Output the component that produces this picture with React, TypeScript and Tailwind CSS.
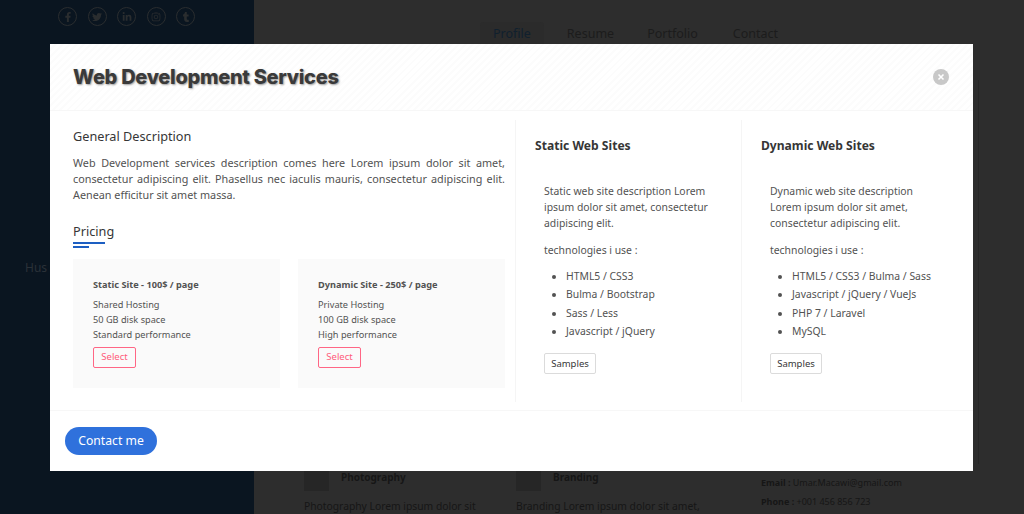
import React from "react";
import { FaFacebookF, FaTwitter, FaLinkedinIn, FaInstagram, FaTumblr } from "react-icons/fa";

const socials = [FaFacebookF, FaTwitter, FaLinkedinIn, FaInstagram, FaTumblr];

const plans = [
  { title: "Static Site - 100$ / page", lines: ["Shared Hosting", "50 GB disk space", "Standard performance"] },
  { title: "Dynamic Site - 250$ / page", lines: ["Private Hosting", "100 GB disk space", "High performance"] },
];

const services = [
  {
    title: "Static Web Sites",
    description: "Static web site description Lorem ipsum dolor sit amet, consectetur adipiscing elit.",
    tech: ["HTML5 / CSS3", "Bulma / Bootstrap", "Sass / Less", "Javascript / jQuery"],
  },
  {
    title: "Dynamic Web Sites",
    description: "Dynamic web site description Lorem ipsum dolor sit amet, consectetur adipiscing elit.",
    tech: ["HTML5 / CSS3 / Bulma / Sass", "Javascript / jQuery / VueJs", "PHP 7 / Laravel", "MySQL"],
  },
];

const App: React.FC = () => {
  return (
    <div className="relative flex h-[514px] w-[1024px] overflow-hidden bg-[#2d2d2d] font-['Noto_Sans',sans-serif]">
      {/* Page behind the modal */}
      <aside className="w-[254px] shrink-0 bg-[#0a1520]">
        <div className="flex gap-[10.5px] pl-[58px] pt-[7px]">
          {socials.map((Icon, i) => (
            <span
              key={i}
              className="flex h-[19px] w-[19px] items-center justify-center rounded-full border border-[#2a2d2f] text-[10px] text-[#2a2d2f]"
            >
              <Icon />
            </span>
          ))}
        </div>
        <p className="pl-[25px] pt-[233px] text-[12px] text-[#2a3138]">Hus</p>
      </aside>

      <main className="flex-1">
        <nav className="flex pl-[226px] pt-[22px] text-[12.5px] text-[#1c1c1c]">
          <span className="rounded-t bg-[#2b2b2b] px-[13px] py-[3px] text-[#10202e]">Profile</span>
          <span className="ml-[23px] py-[3px]">Resume</span>
          <span className="ml-[33px] py-[3px]">Portfolio</span>
          <span className="ml-[35px] py-[3px]">Contact</span>
        </nav>
        <div className="mt-[423px] flex pl-[50px] text-[#161616]">
          <div className="w-[212px]">
            <div className="flex gap-[12px]">
              <span className="h-[21px] w-[25px] bg-[#262626]" />
              <b className="text-[10px]">Photography</b>
            </div>
            <p className="mt-[8px] text-[10.3px]">Photography Lorem ipsum dolor sit</p>
          </div>
          <div className="w-[245px]">
            <div className="flex gap-[12px]">
              <span className="h-[21px] w-[25px] bg-[#262626]" />
              <b className="text-[10px]">Branding</b>
            </div>
            <p className="mt-[8px] text-[10.3px]">Branding Lorem ipsum dolor sit amet,</p>
          </div>
          <div className="mt-[3px] text-[9px] leading-[19px]">
            <p><b>Email :</b> Umar.Macawi@gmail.com</p>
            <p><b>Phone :</b> +001 456 856 723</p>
          </div>
        </div>
      </main>
      <span className="absolute left-[978px] top-[80px] h-[384px] w-px bg-[#262626]" />

      {/* Modal */}
      <div className="absolute left-[50px] top-[44px] flex h-[427px] w-[923px] flex-col bg-white text-[#525252]">
        <header className="flex h-[67px] shrink-0 items-center justify-between border-b border-[#f7f7f7] bg-[repeating-linear-gradient(135deg,#ffffff_0px,#ffffff_3px,#fcfcfc_3px,#fcfcfc_5px)] pl-[23px] pr-[24px]">
          <h1 className="font-['Inter',sans-serif] text-[20px] font-extrabold tracking-[-0.3px] text-[#3a3a3a] [text-shadow:1px_1px_2px_#9a9a9a]">
            Web Development Services
          </h1>
          <button className="flex h-[16px] w-[16px] items-center justify-center rounded-full bg-[#c8c8c8]">
            <svg width="8" height="8" viewBox="0 0 8 8" fill="none" stroke="white" strokeWidth="1.6">
              <path d="M1.5 1.5l5 5M6.5 1.5l-5 5" />
            </svg>
          </button>
        </header>

        <div className="flex h-[299px] shrink-0">
          <section className="w-[465px] shrink-0 pl-[23px] pr-[10px] pt-[15px]">
            <h2 className="text-[12.7px] leading-[20px] text-[#363636]">General Description</h2>
            <p className="mt-[9px] text-justify text-[10.8px] leading-[16px]">
              Web Development services description comes here Lorem ipsum dolor sit amet, consectetur adipiscing elit.
              Phasellus nec iaculis mauris, consectetur adipiscing elit. Aenean efficitur sit amet massa.
            </p>
            <h2 className="mt-[18px] text-[12.7px] leading-[20px] text-[#363636]">Pricing</h2>
            <div className="mt-[1px] h-[2px] w-[32px] bg-[#1d5fc2]" />
            <div className="mt-[2px] h-[2px] w-[16px] bg-[#1d5fc2]" />
            <div className="mt-[11px] grid grid-cols-2 gap-[18px]">
              {plans.map((plan) => (
                <div key={plan.title} className="h-[129px] bg-[#fafafa] pl-[20px] pt-[18px]">
                  <h3 className="text-[9.2px] font-bold leading-[16px]">{plan.title}</h3>
                  <ul className="mt-[4px] text-[9.2px] leading-[15px]">
                    {plan.lines.map((line) => (
                      <li key={line}>{line}</li>
                    ))}
                  </ul>
                  <button className="mt-[5px] h-[21px] w-[43px] rounded-[2px] border border-[#ff6685] text-[9.5px] text-[#ff5c7c]">
                    Select
                  </button>
                </div>
              ))}
            </div>
          </section>

          {services.map((service, i) => (
            <section
              key={service.title}
              className={`mb-[8px] mt-[9px] border-l border-[#f5f5f5] pl-[19px] pt-[17px] ${i === 0 ? "w-[226px]" : "flex-1"}`}
            >
              <h2 className="text-[12.1px] font-bold leading-[18px] text-[#363636]">{service.title}</h2>
              <div className="mt-[28px] pl-[9px] text-[10.4px] leading-[16px]">
                <p className="w-[168px]">{service.description}</p>
                <p className="mt-[11px]">technologies i use :</p>
                <ul className="mt-[9px] list-disc pl-[22px] leading-[18.3px]">
                  {service.tech.map((t) => (
                    <li key={t}>{t}</li>
                  ))}
                </ul>
                <button className="mt-[13px] h-[21px] w-[52px] rounded-[2px] border border-[#dbdbdb] text-[9.5px] text-[#363636]">
                  Samples
                </button>
              </div>
            </section>
          ))}
        </div>

        <footer className="flex flex-1 items-center border-t border-[#f7f7f7] pl-[15px]">
          <button className="h-[28px] w-[92px] rounded-full bg-[#2f71dc] text-[12.2px] text-white">Contact me</button>
        </footer>
      </div>
    </div>
  );
};

export default App;
